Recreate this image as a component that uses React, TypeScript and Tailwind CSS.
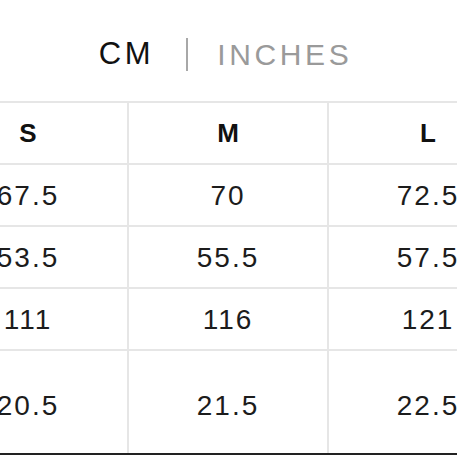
import React from 'react';

const sizes = ['S', 'M', 'L'];

const rows = [
  ['67.5', '70', '72.5'],
  ['53.5', '55.5', '57.5'],
  ['111', '116', '121'],
];

const lastRow = ['20.5', '21.5', '22.5'];

const App = () => {
  return (
    <div
      className="w-[457px] h-[457px] overflow-hidden bg-white"
      style={{ fontFamily: '"Liberation Sans", Arial, sans-serif' }}
    >
      <div className="h-[101px] flex items-center justify-center pt-[7px] pr-[6px]">
        <span className="text-[31px] tracking-[0.12em] text-[#111]">CM</span>
        <span className="w-[2px] h-[33px] bg-[#a8a8a8] ml-[32px] mr-[29px]" />
        <span className="text-[30px] tracking-[0.12em] text-[#9a9a9a]">INCHES</span>
      </div>

      <div className="ml-[-71px] w-[600px] border-t-2 border-[#e6e6e6]">
        <div className="grid grid-cols-[200px_200px_200px]">
          {sizes.map((s) => (
            <div
              key={s}
              className="h-[62px] flex items-center justify-center border-r-2 border-b-2 border-[#e6e6e6] pt-[1px] text-[26px] font-bold text-[#111]"
            >
              {s}
            </div>
          ))}
          {rows.map((row, i) =>
            row.map((v) => (
              <div
                key={i + v}
                className="h-[62px] flex items-center justify-center border-r-2 border-b-2 border-[#e6e6e6] pt-[2px] text-[28px] tracking-[2px] text-[#1c1c1c]"
              >
                {v}
              </div>
            ))
          )}
          {lastRow.map((v) => (
            <div
              key={v}
              className="h-[102px] flex items-center justify-center border-r-2 border-[#e6e6e6] pt-[8px] text-[28px] tracking-[2px] text-[#1c1c1c]"
            >
              {v}
            </div>
          ))}
        </div>
        <div className="h-[2px] bg-[#222]" />
      </div>
    </div>
  );
};

export default App;
